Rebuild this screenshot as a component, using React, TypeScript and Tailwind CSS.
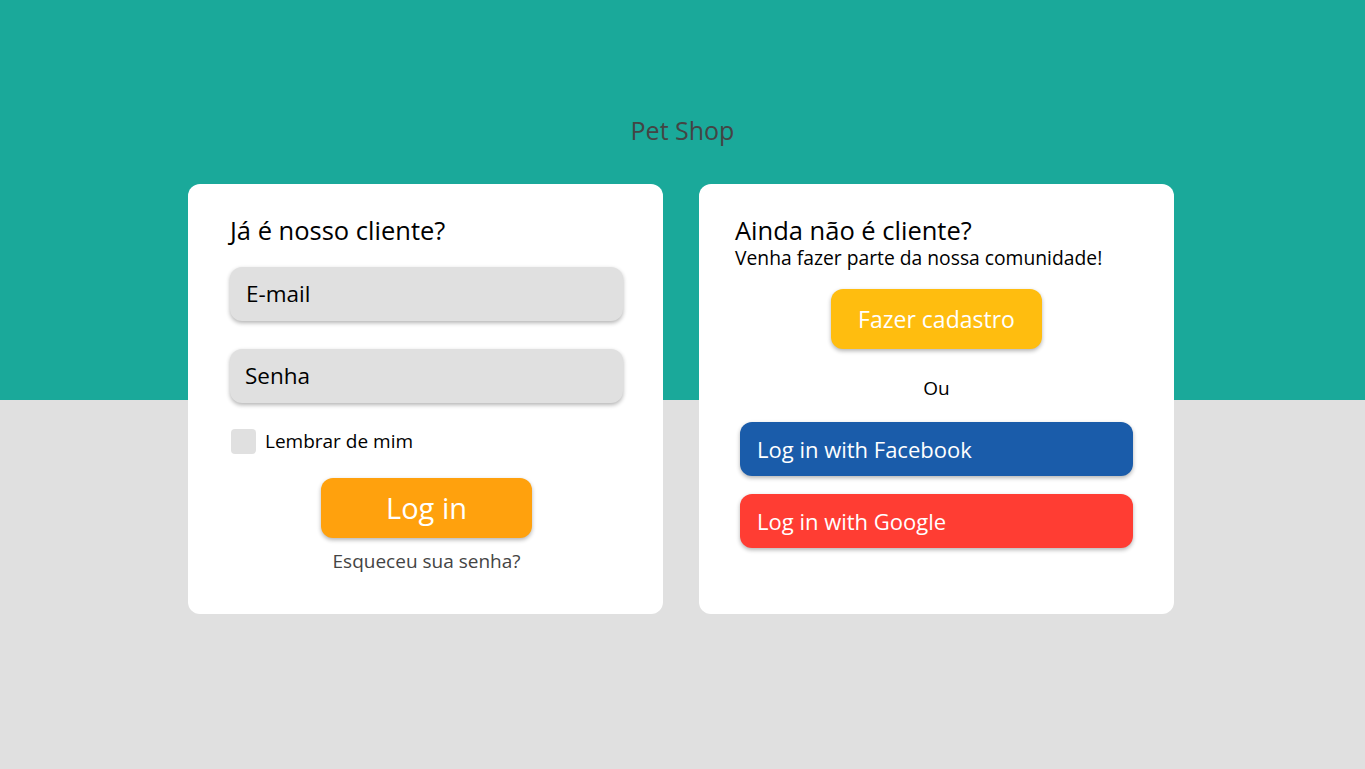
export default function App() {
  return (
    <div
      className="flex min-h-screen flex-col items-center bg-[linear-gradient(to_bottom,#1aa99a_0,#1aa99a_400px,#e0e0e0_400px)] pt-[114px]"
      style={{ fontFamily: '"Open Sans", "Noto Sans", sans-serif' }}
    >
      <h1 className="text-[25px] leading-[32px] text-[#444444]">Pet Shop</h1>

      <div className="mr-[3px] mt-[38px] flex gap-[36px]">
        {/* login */}
        <div className="flex h-[430px] w-[475px] flex-col rounded-[12px] bg-white pl-[42px] pr-[40px] pt-[30px]">
          <h2 className="text-[25.5px] leading-[32px] text-black">Já é nosso cliente?</h2>

          <div className="mt-[21px] flex h-[54px] items-center rounded-[12px] bg-[#e0e0e0] px-[16px] text-[22.5px] text-black shadow-[0_2px_4px_rgba(0,0,0,0.3)]">
            E-mail
          </div>
          <div className="mt-[28px] flex h-[54px] items-center rounded-[12px] bg-[#e0e0e0] px-[15px] text-[22.5px] text-black shadow-[0_2px_4px_rgba(0,0,0,0.3)]">
            Senha
          </div>

          <label className="mt-[25px] flex items-center gap-[9px] text-[19px] leading-[26px] text-black">
            <span className="ml-px h-[25px] w-[25px] rounded-[4px] bg-[#e0e0e0]" />
            Lembrar de mim
          </label>

          <button className="mx-auto mt-[24px] flex h-[60px] w-[211px] items-center justify-center rounded-[12px] bg-[#ffa10d] text-[29px] text-white shadow-[0_2px_4px_rgba(0,0,0,0.3)]">
            Log in
          </button>
          <p className="mt-[11px] text-center text-[19px] leading-[24px] text-[#444444]">Esqueceu sua senha?</p>
        </div>

        {/* cadastro */}
        <div className="flex h-[430px] w-[475px] flex-col rounded-[12px] bg-white px-[36px] pt-[31px]">
          <h2 className="text-[25.5px] leading-[30px] text-black">Ainda não é cliente?</h2>
          <p className="mt-[2px] text-[19.3px] leading-[22px] text-black">Venha fazer parte da nossa comunidade!</p>

          <button className="mx-auto mt-[20px] flex h-[60px] w-[211px] items-center justify-center rounded-[12px] bg-[#ffbd0f] text-[23px] text-white shadow-[0_2px_4px_rgba(0,0,0,0.3)]">
            Fazer cadastro
          </button>

          <p className="mt-[27px] text-center text-[19px] leading-[24px] text-black">Ou</p>

          <button className="mx-auto mt-[22px] flex h-[54px] w-[393px] items-center rounded-[12px] bg-[#1a5caa] px-[17px] text-[22px] text-white shadow-[0_2px_4px_rgba(0,0,0,0.3)]">
            Log in with Facebook
          </button>
          <button className="mx-auto mt-[18px] flex h-[54px] w-[393px] items-center rounded-[12px] bg-[#ff3d33] px-[17px] text-[22px] text-white shadow-[0_2px_4px_rgba(0,0,0,0.3)]">
            Log in with Google
          </button>
        </div>
      </div>
    </div>
  );
}
